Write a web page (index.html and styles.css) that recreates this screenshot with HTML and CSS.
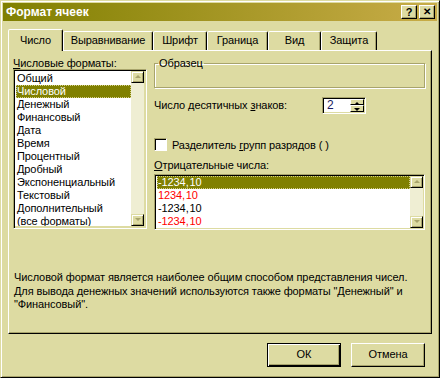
FILE: index.html
```html
<!DOCTYPE html>
<html lang="ru">
<head>
  <meta charset="UTF-8" />
  <title>Формат ячеек</title>
  <link rel="stylesheet" href="styles.css">
</head>
<body>

  <div class="window">
    <div class="titlebar">
      <span class="title">Формат ячеек</span>
      <div class="cap-btns">
        <span class="cap-btn">?</span>
        <span class="cap-btn close">✕</span>
      </div>
    </div>

    <div class="tabs">
      <div class="tab active" style="width:55px">Число</div>
      <div class="tab" style="width:90px">Выравнивание</div>
      <div class="tab" style="width:54px">Шрифт</div>
      <div class="tab" style="width:61px">Граница</div>
      <div class="tab" style="width:53px">Вид</div>
      <div class="tab" style="width:56px">Защита</div>
    </div>

    <div class="panel">
      <div class="panel-top">
        <div class="left-col">
          <div class="label"><u>Ч</u>исловые форматы:</div>
          <div class="listbox formats">
            <ul class="items">
              <li>Общий</li>
              <li class="selected">Числовой</li>
              <li>Денежный</li>
              <li>Финансовый</li>
              <li>Дата</li>
              <li>Время</li>
              <li>Процентный</li>
              <li>Дробный</li>
              <li>Экспоненциальный</li>
              <li>Текстовый</li>
              <li>Дополнительный</li>
              <li>(все форматы)</li>
            </ul>
            <div class="scrollbar">
              <div class="sb-btn up"></div>
              <div class="sb-track"></div>
              <div class="sb-btn down"></div>
            </div>
          </div>
        </div>

        <div class="right-col">
          <fieldset class="sample">
            <legend>Образец</legend>
            <div class="sample-body"></div>
          </fieldset>

          <div class="decimals">
            <span class="decimals-label">Число десятичных <u>з</u>наков:</span>
            <div class="spin">
              <div class="spin-edit">2</div>
              <div class="spin-btns">
                <div class="spin-btn up"></div>
                <div class="spin-btn down"></div>
              </div>
            </div>
          </div>

          <label class="check"><span class="box"></span><span>Разделитель <u>г</u>рупп разрядов (&nbsp;)</span></label>

          <div class="label neg-label"><u>О</u>трицательные числа:</div>
          <div class="listbox negatives">
            <ul class="items">
              <li class="selected">-1234,&#8202;10</li>
              <li class="red">1234,&#8202;10</li>
              <li>-1234,&#8202;10</li>
              <li class="red">-1234,&#8202;10</li>
            </ul>
            <div class="scrollbar">
              <div class="sb-btn up"></div>
              <div class="sb-track"></div>
              <div class="sb-btn down"></div>
            </div>
          </div>
        </div>
      </div>

      <p class="desc">Числовой формат является наиболее общим способом представления чисел.
        Для вывода денежных значений используются также форматы "Денежный" и
        "Финансовый".</p>
    </div>

    <div class="buttons">
      <div class="btn default">ОК</div>
      <div class="btn">Отмена</div>
    </div>
  </div>

</body>
</html>
```

FILE: styles.css
```css
html, body {
  margin: 0;
  padding: 0;
  background: #dddba2;
  font-family: "Liberation Sans", Arial, sans-serif;
  font-size: 11px;
  letter-spacing: -0.1px;
  color: black;
}

/* окно диалога */
.window {
  width: 440px;
  height: 378px;
  box-sizing: border-box;
  padding: 2px;
  border: 1px solid;
  border-color: #dddba2 #000 #000 #dddba2;
  box-shadow: inset 1px 1px 0 #fff, inset -1px -1px 0 #a8a46c;
  background: #dddba2;
}

.titlebar {
  height: 18px;
  display: flex;
  align-items: center;
  justify-content: space-between;
  padding: 0 2px 0 3px;
  background: linear-gradient(to right, #808000, #c8ac48);
  color: white;
  font-size: 12px;
  font-weight: bold;
  letter-spacing: 0;
}

.cap-btns {
  display: flex;
  gap: 2px;
}

.cap-btn {
  width: 16px;
  height: 14px;
  box-sizing: border-box;
  background: #dddba2;
  color: black;
  font-size: 11px;
  font-weight: bold;
  line-height: 12px;
  text-align: center;
  border: 1px solid;
  border-color: #fff #000 #000 #fff;
  box-shadow: inset -1px -1px 0 #a8a46c;
}

.cap-btn.close {
  font-size: 10px;
}

/* вкладки */
.tabs {
  display: flex;
  align-items: flex-end;
  height: 21px;
  margin: 8px 0 0 5px;
  position: relative;
  z-index: 1;
}

.tab {
  height: 19px;
  box-sizing: border-box;
  border: 1px solid;
  border-bottom: none;
  border-color: #fff #000 transparent #fff;
  border-radius: 2px 2px 0 0;
  box-shadow: inset -1px 0 0 #a8a46c;
  text-align: center;
  line-height: 17px;
  background: #dddba2;
}

.tab.active {
  height: 22px;
  margin-bottom: -1px;
  line-height: 20px;
  padding-bottom: 2px;
}

.panel {
  margin: 0 5px;
  height: 284px;
  box-sizing: border-box;
  border: 1px solid;
  border-color: #fff #000 #000 #fff;
  box-shadow: inset -1px -1px 0 #a8a46c;
  padding: 6px 6px 0 4px;
}

.panel-top {
  display: flex;
  gap: 7px;
}

.left-col {
  width: 134px;
}

.right-col {
  flex: 1;
}

.label {
  height: 12px;
  line-height: 13px;
}

.neg-label {
  height: 13px;
}

/* списки */
.listbox {
  display: flex;
  box-sizing: border-box;
  border: 1px solid;
  border-color: #a8a46c #fff #fff #a8a46c;
  box-shadow: inset 1px 1px 0 #000, inset -1px -1px 0 #dddba2;
  padding: 1px 2px 2px 1px;
}

.listbox.formats {
  height: 160px;
}

.listbox.negatives {
  height: 56px;
  margin-top: 2px;
  padding: 1px;
}

.items {
  flex: 1;
  list-style: none;
  margin: 0;
  padding: 1px 0 0 1px;
  background: white;
  overflow: hidden;
}

.negatives .items {
  padding-top: 0;
}

.items li {
  height: 13px;
  line-height: 13px;
  padding-left: 1px;
  white-space: nowrap;
}

.items li.selected {
  background: #808000;
  color: white;
  outline: 1px dotted #d4d088;
  outline-offset: -1px;
}

.items li.red {
  color: #ff0000;
}

.scrollbar {
  width: 13px;
  display: flex;
  flex-direction: column;
  background: #efeed3;
}

.sb-track {
  flex: 1;
}

.sb-btn {
  height: 12px;
  box-sizing: border-box;
  background: #dddba2;
  border: 1px solid;
  border-color: #dddba2 #000 #000 #dddba2;
  box-shadow: inset 1px 1px 0 #fff, inset -1px -1px 0 #a8a46c;
  position: relative;
}

.sb-btn::after {
  content: "";
  position: absolute;
  left: 3px;
  top: 3px;
  border-left: 3px solid transparent;
  border-right: 3px solid transparent;
}

.sb-btn.up::after {
  border-bottom: 3px solid #a8a46c;
}

.sb-btn.down::after {
  border-top: 3px solid #a8a46c;
}

/* правая колонка */
.sample {
  margin: 0;
  padding: 0;
  border: 1px solid #a8a46c;
  box-shadow: inset 1px 1px 0 #fff, 1px 1px 0 #fff;
}

.sample legend {
  padding: 0 1px;
  margin-left: 3px;
  line-height: 12px;
}

.sample-body {
  height: 18px;
}

.decimals {
  display: flex;
  align-items: center;
  height: 16px;
  margin-top: 9px;
}

.decimals-label {
  width: 168px;
}

.spin {
  display: flex;
  width: 44px;
  height: 17px;
  box-sizing: border-box;
  border: 1px solid;
  border-color: #a8a46c #fff #fff #a8a46c;
  box-shadow: inset 1px 1px 0 #000;
  padding: 1px;
}

.spin-edit {
  flex: 1;
  background: white;
  padding-left: 3px;
  line-height: 13px;
  color: #1a1a60;
  font-size: 12px;
}

.spin-btns {
  width: 14px;
  display: flex;
  flex-direction: column;
}

.spin-btn {
  flex: 1;
  box-sizing: border-box;
  background: #dddba2;
  border: 1px solid;
  border-color: #fff #000 #000 #fff;
  position: relative;
}

.spin-btn::after {
  content: "";
  position: absolute;
  left: 3px;
  top: 2px;
  border-left: 3px solid transparent;
  border-right: 3px solid transparent;
}

.spin-btn.up::after {
  border-bottom: 3px solid #000;
}

.spin-btn.down::after {
  border-top: 3px solid #000;
}

.check {
  display: flex;
  align-items: center;
  gap: 5px;
  height: 13px;
  margin: 25px 0 8px 0;
}

.check .box {
  width: 13px;
  height: 13px;
  box-sizing: border-box;
  background: white;
  border: 1px solid;
  border-color: #a8a46c #fff #fff #a8a46c;
  box-shadow: inset 1px 1px 0 #000;
}

.desc {
  margin: 41px 0 0 1px;
  line-height: 13.5px;
}

/* кнопки */
.buttons {
  display: flex;
  justify-content: flex-end;
  gap: 10px;
  margin: 9px 12px 0 0;
}

.btn {
  width: 74px;
  height: 24px;
  box-sizing: border-box;
  border: 1px solid;
  border-color: #fff #000 #000 #fff;
  box-shadow: inset -1px -1px 0 #a8a46c;
  text-align: center;
  line-height: 21px;
}

.btn.default {
  border: 1px solid #000;
  box-shadow: inset 1px 1px 0 #fff, inset -1px -1px 0 #000, inset -2px -2px 0 #a8a46c;
}
```
